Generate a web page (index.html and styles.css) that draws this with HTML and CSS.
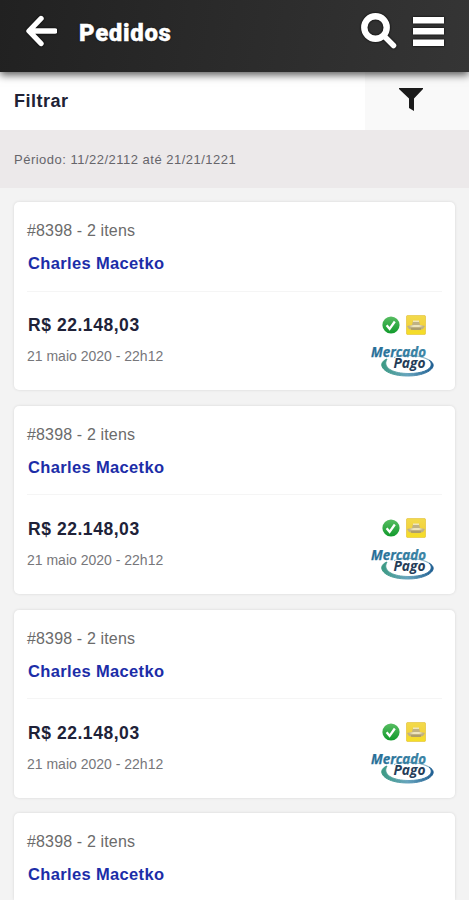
FILE: index.html
```html
<!DOCTYPE html>
<html lang="pt-BR">
<head>
<meta charset="utf-8">
<title>Pedidos</title>
<link rel="stylesheet" href="styles.css">
</head>
<body>
<svg width="0" height="0" class="defs">
  <defs>
    <linearGradient id="green" x1="0" y1="0" x2="0" y2="1"><stop offset="0" stop-color="#58bd62"/><stop offset="1" stop-color="#109a2b"/></linearGradient>
    <linearGradient id="yellow" x1="0" y1="0" x2="0" y2="1"><stop offset="0" stop-color="#f2da4c"/><stop offset=".55" stop-color="#f3d33c"/><stop offset="1" stop-color="#f5e023"/></linearGradient>
    <linearGradient id="ring" x1="0" y1="0" x2="1" y2="0"><stop offset="0" stop-color="#3c9a83"/><stop offset=".5" stop-color="#67a4bd"/><stop offset="1" stop-color="#1d5d91"/></linearGradient>
    <linearGradient id="brand" x1="0" y1="0" x2="1" y2="0"><stop offset="0" stop-color="#246c96"/><stop offset="1" stop-color="#3d88a8"/></linearGradient>
    <symbol id="check" viewBox="0 0 18 18">
      <circle cx="9" cy="9" r="8.6" fill="url(#green)"/>
      <path d="M4.6 9.3l3 3.500 5.200-7.300" fill="none" stroke="#fff" stroke-width="2.300"/>
    </symbol>
    <symbol id="hands" viewBox="0 0 20 20">
      <rect x=".4" y=".4" width="19.200" height="19.200" rx="1.500" fill="url(#yellow)" stroke="#e6c545" stroke-width=".8"/>
      <path d="M1 11l5-1 1-4h6l1 4 5 1-2 3-4 1H7l-4-1z" fill="#c0b284"/>
      <path d="M7 5.500h6v1.500H7zM3 11l5-1h5l4 1-4 1H7z" fill="#eee5bd"/>
      <path d="M5 14h10" stroke="#9a8a55" stroke-width="1"/>
    </symbol>
    <symbol id="mp" viewBox="0 0 66 34">
      <path d="M17 15C6 19 12 32 38 32C58 32 70 22 59 16C66 23 56 29.500 39 29.500C18 29.500 13 21 17 15Z" fill="url(#ring)" stroke="url(#ring)" stroke-width="1"/>
      <path d="M24 13.500C38 9.500 52 12 59 16" fill="none" stroke="#8ab3c5" stroke-width="1.200"/>
      <text class="brand-top" x="1" y="12.500" textLength="55" lengthAdjust="spacingAndGlyphs">Mercado</text>
      <text class="brand-bottom" x="23.500" y="24" textLength="32" lengthAdjust="spacingAndGlyphs">Pago</text>
    </symbol>
  </defs>
</svg>
<header class="topbar">
  <svg class="back" viewBox="0 0 32 32" width="32" height="32"><path d="M16 3.500L4 16l12 12.500M5 16h25" fill="none" stroke="#fff" stroke-width="5.400" stroke-linecap="round" stroke-linejoin="round"/></svg>
  <h1>Pedidos</h1>
  <svg class="search" viewBox="0 0 36 36" width="36" height="36"><circle cx="14.500" cy="14.500" r="11.200" fill="none" stroke="#fff" stroke-width="6.400"/><path d="M23 23l9.500 9.500" stroke="#fff" stroke-width="5.500" stroke-linecap="round"/></svg>
  <svg class="menu" viewBox="0 0 31 29" width="31" height="29"><path d="M0 0h31v6.500H0zM0 11h31v6.500H0zM0 22.500h31V29H0z" fill="#fff"/></svg>
</header>
<section class="filter">
  <h2>Filtrar</h2>
  <div class="filter-button"><svg viewBox="0 0 24 24" width="24" height="24"><path d="M0 0h24v1l-9 9.500V23l-5-3v-9.500L0 1z" fill="#1b1b1b"/></svg></div>
</section>
<div class="period">Périodo: 11/22/2112 até 21/21/1221</div>
<main class="orders">
  <article class="card">
    <div class="card-head"><p class="number">#8398 - 2 itens</p><p class="customer">Charles Macetko</p></div>
    <div class="card-body"><div><p class="price">R$ 22.148,03</p><p class="date">21 maio 2020 - 22h12</p></div>
      <div class="payment"><div class="status"><svg width="18" height="18"><use href="#check"/></svg><svg width="20" height="20"><use href="#hands"/></svg></div><svg class="logo" width="66" height="34"><use href="#mp"/></svg></div></div>
  </article>
  <article class="card">
    <div class="card-head"><p class="number">#8398 - 2 itens</p><p class="customer">Charles Macetko</p></div>
    <div class="card-body"><div><p class="price">R$ 22.148,03</p><p class="date">21 maio 2020 - 22h12</p></div>
      <div class="payment"><div class="status"><svg width="18" height="18"><use href="#check"/></svg><svg width="20" height="20"><use href="#hands"/></svg></div><svg class="logo" width="66" height="34"><use href="#mp"/></svg></div></div>
  </article>
  <article class="card">
    <div class="card-head"><p class="number">#8398 - 2 itens</p><p class="customer">Charles Macetko</p></div>
    <div class="card-body"><div><p class="price">R$ 22.148,03</p><p class="date">21 maio 2020 - 22h12</p></div>
      <div class="payment"><div class="status"><svg width="18" height="18"><use href="#check"/></svg><svg width="20" height="20"><use href="#hands"/></svg></div><svg class="logo" width="66" height="34"><use href="#mp"/></svg></div></div>
  </article>
  <article class="card card-partial">
    <div><p class="number">#8398 - 2 itens</p><p class="customer">Charles Macetko</p></div>
  </article>
</main>
</body>
</html>
```
FILE: styles.css
```css
* { box-sizing: border-box; }
body { margin: 0; height: 900px; overflow: hidden; background: #f3f3f3; font-family: "Liberation Sans", Arial, sans-serif; }
h1, h2, p { margin: 0; }
svg { display: block; }
.defs { position: absolute; }
.topbar { position: relative; z-index: 1; height: 72px; display: flex; align-items: center; padding: 0 25px 10px; background: linear-gradient(100deg, #212121, #353535); box-shadow: 0 3px 8px rgba(0, 0, 0, .65); }
.topbar svg { filter: drop-shadow(0 0 1px #000); }
h1 { margin: 4px 0 0 22px; font: 900 24px/30px Roboto, sans-serif; letter-spacing: .65px; color: #fff; text-shadow: 0 0 2px #000; -webkit-text-stroke: .4px #fff; }
.search { margin-left: auto; }
.menu { margin-left: 16px; }
.filter { height: 58px; display: flex; background: #fff; }
h2 { flex: 1; padding-left: 14px; font-size: 18px; line-height: 58px; letter-spacing: .5px; color: #202235; }
.filter-button { width: 104px; padding: 16px 0 0 34px; background: #f9f9f9; }
.period { height: 58px; padding-left: 14px; font-size: 13px; line-height: 59px; letter-spacing: .49px; color: #66656a; background: #ece9ea; }
.orders { height: 712px; display: flex; flex-direction: column; gap: 15.6px; padding: 14.4px 14px 0; overflow: hidden; }
.card { flex: none; height: 188px; padding: 0 13px; border-radius: 5px; background: #fff; box-shadow: 0 0 3px rgba(0, 0, 0, .12); }
.card-partial { flex: 1; min-height: 0; padding-top: 18px; border-radius: 5px 5px 0 0; }
.card-head { height: 89.5px; padding-top: 18px; border-bottom: 1px solid #f5f5f5; }
.number { font-size: 16px; line-height: 22px; letter-spacing: .15px; color: #6b6b6b; }
.customer { margin-top: 10px; padding-left: 1px; font-size: 16.5px; line-height: 22px; font-weight: 700; letter-spacing: .35px; color: #1c2da8; }
.card-body { display: flex; justify-content: space-between; padding-top: 21.5px; }
.price { padding-left: 1px; font-size: 17.5px; line-height: 24px; font-weight: 700; letter-spacing: .55px; color: #202238; }
.date { margin-top: 9px; font-size: 14px; line-height: 20px; color: #77777b; }
.payment { padding: 1.5px 6px 0 0; }
.status { display: flex; align-items: center; gap: 6px; padding-left: 12px; }
.logo { margin-top: 9px; }
.brand-top, .brand-bottom { font-family: "Open Sans", sans-serif; font-size: 13.5px; font-style: italic; font-weight: 700; }
.brand-top { fill: url(#brand); stroke: #2d7499; stroke-width: .25px; }
.brand-bottom { fill: #263d59; stroke: #fff; stroke-width: 1.5px; paint-order: stroke; font-size: 14px; }
```
